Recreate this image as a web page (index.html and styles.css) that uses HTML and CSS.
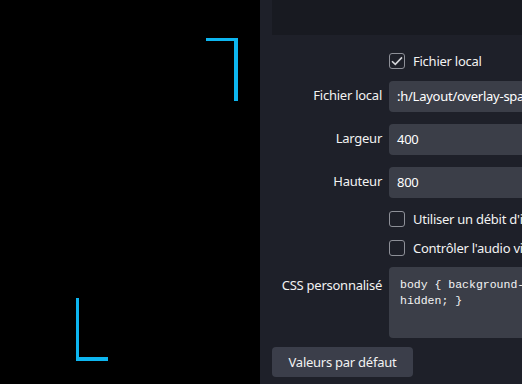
FILE: index.html
```html
<!DOCTYPE html>
<html lang="fr">
<head>
    <meta charset="UTF-8">
    <title>Propriétés de la source navigateur</title>
    <link rel="stylesheet" href="styles.css">
</head>
<body>
    <div class="preview">
        <div class="corner corner-top"></div>
        <div class="corner corner-bottom"></div>
    </div>

    <div class="panel">
        <div class="panel-inner">
            <div class="top-box"></div>

            <div class="form">
                <div class="label"></div>
                <label class="check-row">
                    <span class="checkbox checked">
                        <svg width="12" height="10" viewBox="0 0 12 10"><path d="M1 5.2 L4.3 8.4 L11 1.4" fill="none" stroke="#d4d5d9" stroke-width="1.6"/></svg>
                    </span>
                    Fichier local
                </label>

                <div class="label">Fichier local</div>
                <div class="field">:h/Layout/overlay-spacer.html</div>

                <div class="label">Largeur</div>
                <div class="field">400</div>

                <div class="label">Hauteur</div>
                <div class="field">800</div>

                <div class="label"></div>
                <label class="check-row">
                    <span class="checkbox"></span>
                    Utiliser un débit d'images personnalisé
                </label>

                <div class="label"></div>
                <label class="check-row">
                    <span class="checkbox"></span>
                    Contrôler l'audio via OBS
                </label>

                <div class="label label-top">CSS personnalisé</div>
                <div class="code">body { background-color: rgba(0, 0, 0, 0); margin: 0px auto; overflow:<br>hidden; }</div>
            </div>

            <button class="reset">Valeurs par défaut</button>
        </div>
    </div>
</body>
</html>
```

FILE: styles.css
```css
body {
    display: flex;
    margin: 0;
    height: 384px;
    overflow: hidden;
    background-color: #1e2029;
    font-family: "Noto Sans", "Open Sans", sans-serif;
    font-size: 13px;
    letter-spacing: -0.25px;
    color: #f2f2f2;
}

/* preview canvas on the left */
.preview {
    position: relative;
    width: 260px;
    flex-shrink: 0;
    background-color: #000;
}

.corner {
    position: absolute;
    width: 32px;
    height: 63px;
    box-sizing: border-box;
    border: 0 solid #0db6f0;
}

.corner-top {
    left: 206px;
    top: 38px;
    border-top-width: 3px;
    border-right-width: 4px;
}

.corner-bottom {
    left: 76px;
    top: 298px;
    border-left-width: 3px;
    border-bottom-width: 4px;
}

/* properties panel */
.panel {
    flex: 1;
    overflow: hidden;
    padding-left: 12px;
}

.panel-inner {
    width: 520px;
}

.top-box {
    height: 35px;
    background-color: #181a21;
}

.form {
    display: grid;
    grid-template-columns: 110px 1fr;
    column-gap: 7px;
    row-gap: 12px;
    margin-top: 18px;
}

.label {
    align-self: center;
    text-align: right;
    line-height: 18px;
    padding-bottom: 3px;
}

.label-top {
    align-self: start;
    margin-top: 8px;
    padding-bottom: 0;
}

.check-row {
    display: flex;
    align-items: center;
    gap: 8px;
    height: 17px;
    white-space: nowrap;
}

.check-row:first-of-type {
    height: 16px;
}

.checkbox {
    display: flex;
    align-items: center;
    justify-content: center;
    width: 16px;
    height: 16px;
    box-sizing: border-box;
    border: 1.5px solid #8e9098;
    border-radius: 3px;
}

.field {
    height: 31px;
    line-height: 31px;
    padding-left: 8px;
    background-color: #3b3e48;
    border-radius: 4px;
    white-space: nowrap;
    color: #fff;
}

.code {
    height: 71px;
    box-sizing: border-box;
    padding: 10px 11px;
    margin-top: -1px;
    background-color: #3b3e48;
    border-radius: 4px;
    font-family: "Liberation Mono", monospace;
    font-size: 11.5px;
    letter-spacing: 0;
    line-height: 16px;
    white-space: nowrap;
    color: #f4f4f4;
}

.reset {
    display: block;
    width: 141px;
    height: 30px;
    margin-top: 9px;
    padding: 0;
    background-color: #3b3e4a;
    color: #f2f2f2;
    border: none;
    border-radius: 4px;
    font-family: inherit;
    font-size: 13px;
    letter-spacing: inherit;
}
```
